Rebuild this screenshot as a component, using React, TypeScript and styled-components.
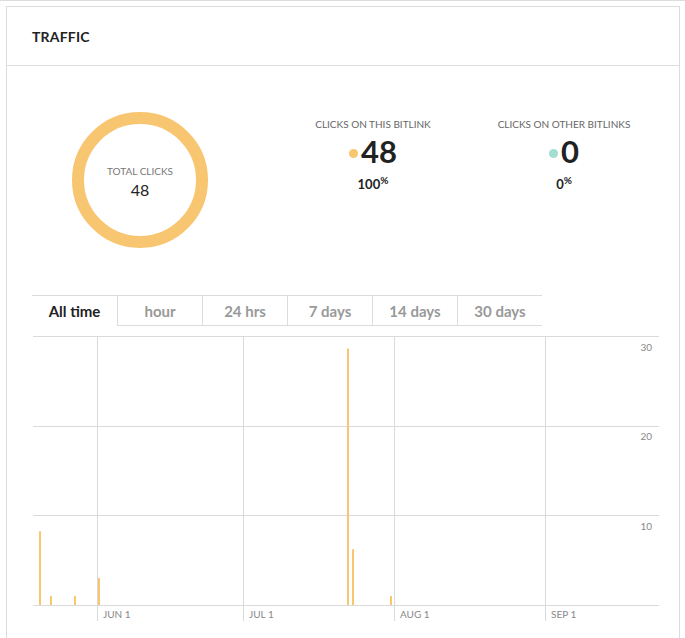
import React from "react";
import styled, { createGlobalStyle } from "styled-components";

const Global = createGlobalStyle`
  html, body { margin: 0; padding: 0; background: #fff; }
  body { font-family: Lato, "Open Sans", sans-serif; color: #222; }
`;

const Page = styled.div`
  border-top: 1px solid #ddd;
  padding: 5px 5px 0 6px;
`;
const Card = styled.div`
  border: 1px solid #dcdcdc;
  border-bottom: none;
  height: 632px;
  box-sizing: border-box;
`;
const Header = styled.div`
  height: 58px;
  border-bottom: 1px solid #dcdcdc;
  display: flex;
  align-items: center;
  padding-left: 25px;
  font-size: 14px;
  font-weight: 700;
  letter-spacing: 0.2px;
  color: #222;
`;
const Body = styled.div`
  padding: 0 0 0 25px;
`;
const Summary = styled.div`
  display: flex;
  align-items: flex-start;
  padding-top: 44px;
  height: 163px;
`;
const Donut = styled.div`
  width: 112px;
  height: 112px;
  margin: 2px 0 0 40px;
  border: 12px solid #f8c571;
  border-radius: 50%;
  display: flex;
  flex-direction: column;
  align-items: center;
  justify-content: center;
`;
const DonutLabel = styled.div`
  font-size: 10px;
  color: #777;
  margin-top: 4px;
`;
const DonutValue = styled.div`
  font-size: 16px;
  color: #222;
  margin-top: 3px;
`;
const Stat = styled.div<{ $ml: number; $w: number }>`
  margin-left: ${p => p.$ml}px;
  width: ${p => p.$w}px;
  display: flex;
  flex-direction: column;
  align-items: center;
  padding-top: 8px;
`;
const StatLabel = styled.div`
  font-size: 10px;
  color: #666;
  white-space: nowrap;
`;
const StatValue = styled.div`
  display: flex;
  align-items: center;
  font-size: 31px;
  font-weight: 700;
  line-height: 34px;
  margin-top: 4px;
  color: #222;
`;
const Dot = styled.span<{ $c: string }>`
  width: 9px;
  height: 9px;
  border-radius: 50%;
  background: ${p => p.$c};
  margin: 5px 3px 0 0;
`;
const Pct = styled.div`
  font-size: 13px;
  font-weight: 700;
  margin-top: 6px;
  sup { font-size: 10px; vertical-align: 5px; }
`;
const Tabs = styled.div`
  display: flex;
  width: 510px;
  border-top: 1px solid #dcdcdc;
  margin-top: 22px;
`;
const Tab = styled.div<{ $active?: boolean }>`
  width: 85px;
  height: 30px;
  box-sizing: border-box;
  display: flex;
  align-items: center;
  justify-content: center;
  font-size: 15px;
  font-weight: 700;
  color: ${p => (p.$active ? "#222" : "#999")};
  border-left: ${p => (p.$active ? "none" : "1px solid #dcdcdc")};
  border-bottom: ${p => (p.$active ? "none" : "1px solid #dcdcdc")};
`;
const ChartWrap = styled.div`
  margin-top: 10px;
`;

const bars = [
  { x: 39, v: 8.2 },
  { x: 50, v: 1 },
  { x: 74, v: 1 },
  { x: 98, v: 3 },
  { x: 347, v: 28.5 },
  { x: 352, v: 6.2 },
  { x: 390, v: 1 },
];

function Chart() {
  const ox = 32, oy = 337, base = 606, per = 9;
  const vx = [96, 242, 393, 544];
  return (
    <svg width="640" height="290" viewBox={`${ox} ${oy} 640 290`} style={{ display: "block", marginLeft: 1 }}>
      {[337, 427, 516, 606].map(y => (
        <line key={y} x1={32} x2={658} y1={y + 0.5} y2={y + 0.5} stroke="#dadada" />
      ))}
      {vx.map(x => (
        <line key={x} x1={x + 0.5} x2={x + 0.5} y1={337} y2={622} stroke="#dadada" />
      ))}
      {bars.map(b => (
        <rect key={b.x} x={b.x - 1} y={base - b.v * per} width={2} height={b.v * per} fill="#f8c571" />
      ))}
      {[["30", 352], ["20", 441], ["10", 531]].map(([t, y]) => (
        <text key={t} x={651} y={y as number} fontSize="10" fill="#888" textAnchor="end" fontFamily="Lato, sans-serif">{t}</text>
      ))}
      {[["JUN 1", 102], ["JUL 1", 248], ["AUG 1", 399], ["SEP 1", 550]].map(([t, x]) => (
        <text key={t} x={x as number} y={619} fontSize="10" fill="#888" fontFamily="Lato, sans-serif">{t}</text>
      ))}
    </svg>
  );
}

export default function App() {
  return (
    <>
      <Global />
      <Page>
        <Card>
          <Header>TRAFFIC</Header>
          <Body>
            <Summary>
              <Donut>
                <DonutLabel>TOTAL CLICKS</DonutLabel>
                <DonutValue>48</DonutValue>
              </Donut>
              <Stat $ml={100} $w={130}>
                <StatLabel>CLICKS ON THIS BITLINK</StatLabel>
                <StatValue><Dot $c="#f8c571" />48</StatValue>
                <Pct>100<sup>%</sup></Pct>
              </Stat>
              <Stat $ml={56} $w={140}>
                <StatLabel>CLICKS ON OTHER BITLINKS</StatLabel>
                <StatValue><Dot $c="#a5dcd0" />0</StatValue>
                <Pct>0<sup>%</sup></Pct>
              </Stat>
            </Summary>
            <Tabs>
              <Tab $active>All time</Tab>
              <Tab>hour</Tab>
              <Tab>24 hrs</Tab>
              <Tab>7 days</Tab>
              <Tab>14 days</Tab>
              <Tab>30 days</Tab>
            </Tabs>
            <ChartWrap>
              <Chart />
            </ChartWrap>
          </Body>
        </Card>
      </Page>
    </>
  );
}
